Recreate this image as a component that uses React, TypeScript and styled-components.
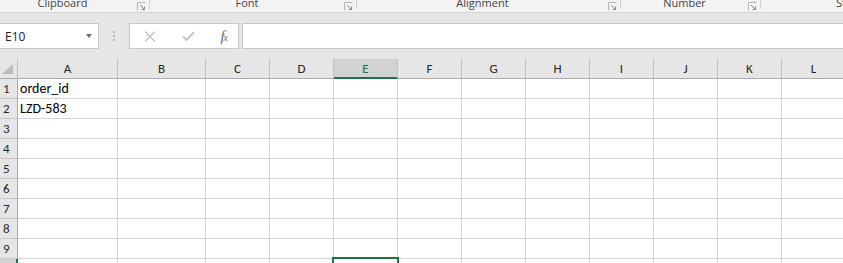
import * as React from 'react';
import styled, { createGlobalStyle } from 'styled-components';

const GREEN = '#217346';
const cellFont = `Calibri, Carlito, "Liberation Sans", Arial, sans-serif`;
const uiFont = `"Segoe UI", "Open Sans", "Noto Sans", sans-serif`;

const GlobalStyle = createGlobalStyle`
  html, body {
    margin: 0;
    padding: 0;
    background: #ffffff;
    overflow: hidden;
  }
  body {
    font-family: ${uiFont};
  }
  * {
    box-sizing: border-box;
  }
`;

type Group = { label: string; width?: number; shift?: number; launcher: boolean };

const ribbonGroups: Group[] = [
  { label: 'Clipboard', width: 162, shift: -12, launcher: true },
  { label: 'Font', width: 207, launcher: true },
  { label: 'Alignment', width: 264, launcher: true },
  { label: 'Number', width: 140, launcher: true },
  { label: 'Styles', launcher: false },
];

const columns = [
  { key: 'A', width: 100 },
  { key: 'B', width: 88 },
  ...['C', 'D', 'E', 'F', 'G', 'H', 'I', 'J', 'K', 'L', 'M'].map((key) => ({ key, width: 64 })),
];

const data: Record<string, string> = {
  A1: 'order_id',
  A2: 'LZD-583',
};

const ACTIVE_COL = 'E';
const ACTIVE_ROW = 10;
const rows = Array.from({ length: 10 }, (_, i) => i + 1);

const Launcher = () => (
  <LauncherIcon width="9" height="9" viewBox="0 0 9 9">
    <path d="M0.5 8.5V0.5H8.5" fill="none" stroke="#b5b5b5" />
    <path d="M3 3L7.5 7.5M4.5 7.5H7.5V4.5" fill="none" stroke="#8c8c8c" />
  </LauncherIcon>
);

export default function App() {
  return (
    <Page>
      <GlobalStyle />

      <RibbonLabels>
        {ribbonGroups.map((g) => (
          <RibbonGroup key={g.label} $width={g.width} $shift={g.shift}>
            {g.launcher ? (
              <>
                <GroupLabel>{g.label}</GroupLabel>
                <Launcher />
                <GroupDivider />
              </>
            ) : (
              <LastLabel>{g.label}</LastLabel>
            )}
          </RibbonGroup>
        ))}
      </RibbonLabels>

      <FormulaArea>
        <NameBox>
          <span>E10</span>
          <DropArrow />
        </NameBox>

        <Grip>
          <i />
          <i />
          <i />
        </Grip>

        <FormulaButtons>
          <svg width="12" height="11" viewBox="0 0 12 11">
            <path d="M1 0.5L11 10.5M11 0.5L1 10.5" stroke="#c3c3c3" strokeWidth="1.4" fill="none" />
          </svg>
          <svg width="13" height="10" viewBox="0 0 13 10">
            <path d="M1 5.5L4.5 9L12 1" stroke="#c3c3c3" strokeWidth="2" fill="none" />
          </svg>
          <Fx>
            f<sub>x</sub>
          </Fx>
        </FormulaButtons>

        <FormulaInput />
      </FormulaArea>

      <Sheet>
        <HeaderRow>
          <Corner>
            <svg width="11" height="10" viewBox="0 0 11 10">
              <path d="M11 0V10H0Z" fill="#bdbdbd" />
            </svg>
          </Corner>
          {columns.map((c) => (
            <ColHeader key={c.key} $width={c.width} $active={c.key === ACTIVE_COL}>
              {c.key}
            </ColHeader>
          ))}
        </HeaderRow>

        {rows.map((r) => (
          <Row key={r}>
            <RowHeader $active={r === ACTIVE_ROW}>{r}</RowHeader>
            {columns.map((c) => {
              const id = `${c.key}${r}`;
              const selected = c.key === ACTIVE_COL && r === ACTIVE_ROW;
              return (
                <Cell key={id} $width={c.width}>
                  {data[id]}
                  {selected && <Selection />}
                </Cell>
              );
            })}
          </Row>
        ))}
      </Sheet>
    </Page>
  );
}

const Page = styled.div`
  width: 843px;
  height: 263px;
  overflow: hidden;
  background: #ffffff;
`;

const RibbonLabels = styled.div`
  display: flex;
  height: 13px;
  background: #f3f3f3;
  border-bottom: 1px solid #d4d4d4;
  overflow: hidden;
  white-space: nowrap;
`;

const RibbonGroup = styled.div<{ $width?: number; $shift?: number }>`
  display: flex;
  align-items: flex-start;
  flex: ${(p) => (p.$width ? `0 0 ${p.$width}px` : '1 1 auto')};
  margin-left: ${(p) => p.$shift ?? 0}px;
  height: 12px;
`;

const GroupLabel = styled.span`
  flex: 1;
  text-align: center;
  font-size: 11px;
  line-height: 12px;
  margin-top: -3px;
  color: #444444;
`;

const LastLabel = styled(GroupLabel)`
  flex: none;
  text-align: left;
  padding-left: 75px;
`;

const LauncherIcon = styled.svg`
  flex: none;
  margin-top: 2px;
  margin-right: 3px;
`;

const GroupDivider = styled.div`
  flex: none;
  width: 1px;
  height: 9px;
  background: #d0d0d0;
`;

const FormulaArea = styled.div`
  display: flex;
  align-items: stretch;
  height: 46px;
  padding: 10px 0;
  background: #e6e6e6;
`;

const NameBox = styled.div`
  display: flex;
  align-items: center;
  justify-content: space-between;
  width: 100px;
  margin-left: -1px;
  padding: 0 6px 0 5px;
  background: #ffffff;
  border: 1px solid #c6c6c6;
  font-family: ${uiFont};
  font-size: 12px;
  color: #222222;
`;

const DropArrow = styled.span`
  width: 0;
  height: 0;
  border-left: 3.5px solid transparent;
  border-right: 3.5px solid transparent;
  border-top: 4px solid #6f6f6f;
`;

const Grip = styled.div`
  display: flex;
  flex-direction: column;
  justify-content: center;
  gap: 2px;
  width: 30px;
  padding-left: 14px;

  i {
    display: block;
    width: 2px;
    height: 2px;
    background: #b7b7b7;
  }
`;

const FormulaButtons = styled.div`
  display: flex;
  align-items: center;
  justify-content: space-between;
  width: 110px;
  padding: 0 10px 0 14px;
  background: #ffffff;
  border: 1px solid #c6c6c6;
`;

const Fx = styled.span`
  font-family: 'Liberation Serif', 'Times New Roman', serif;
  font-style: italic;
  font-size: 15px;
  line-height: 1;
  color: #6a6a6a;

  sub {
    font-size: 10px;
    vertical-align: 0;
    margin-left: -1px;
  }
`;

const FormulaInput = styled.div`
  flex: 1;
  margin-left: 3px;
  margin-right: -2px;
  background: #ffffff;
  border: 1px solid #c6c6c6;
`;

const Sheet = styled.div`
  display: flex;
  flex-direction: column;
  font-family: ${cellFont};
`;

const HeaderRow = styled.div`
  display: flex;
  height: 20px;
  background: #e6e6e6;
`;

const Corner = styled.div`
  display: flex;
  align-items: flex-end;
  justify-content: flex-end;
  flex: 0 0 18px;
  padding: 0 4px 4px 0;
  border-right: 1px solid #bdbdbd;
  border-bottom: 1px solid #ababab;
`;

const ColHeader = styled.div<{ $width: number; $active: boolean }>`
  flex: 0 0 ${(p) => p.$width}px;
  text-align: center;
  font-size: 13px;
  line-height: 19px;
  color: ${(p) => (p.$active ? GREEN : '#262626')};
  background: ${(p) => (p.$active ? '#d2d2d2' : 'transparent')};
  border-right: 1px solid #c0c0c0;
  border-bottom: 1px solid ${(p) => (p.$active ? GREEN : '#ababab')};
  box-shadow: ${(p) => (p.$active ? `inset 0 -1px 0 ${GREEN}` : 'none')};
`;

const Row = styled.div`
  display: flex;
  height: 20px;
`;

const RowHeader = styled.div<{ $active: boolean }>`
  flex: 0 0 18px;
  padding-left: 3px;
  font-size: 13px;
  line-height: 19px;
  color: ${(p) => (p.$active ? GREEN : '#262626')};
  background: ${(p) => (p.$active ? '#d2d2d2' : '#e6e6e6')};
  border-right: 1px solid ${(p) => (p.$active ? GREEN : '#ababab')};
  border-bottom: 1px solid #c6c6c6;
  box-shadow: ${(p) => (p.$active ? `inset -1px 0 0 ${GREEN}` : 'none')};
`;

const Cell = styled.div<{ $width: number }>`
  position: relative;
  flex: 0 0 ${(p) => p.$width}px;
  padding-left: 2px;
  font-size: 14px;
  line-height: 19px;
  color: #000000;
  white-space: nowrap;
  border-right: 1px solid #d4d4d4;
  border-bottom: 1px solid #d4d4d4;
`;

const Selection = styled.div`
  position: absolute;
  top: -2px;
  left: -2px;
  right: -2px;
  bottom: -2px;
  border: 2px solid ${GREEN};
  pointer-events: none;
`;
